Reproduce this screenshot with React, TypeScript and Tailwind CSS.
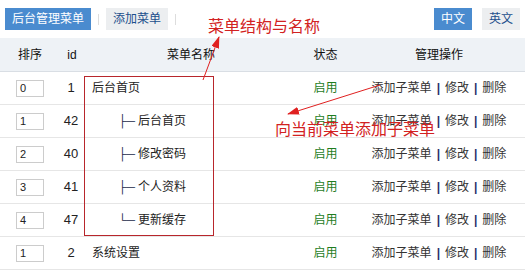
import React from "react";

type Row = {
	order: string;
	id: number;
	name: string;
	prefix?: string;
};

const rows: Row[] = [
	{ order: "0", id: 1, name: "后台首页" },
	{ order: "1", id: 42, name: "后台首页", prefix: "├─" },
	{ order: "2", id: 40, name: "修改密码", prefix: "├─" },
	{ order: "3", id: 41, name: "个人资料", prefix: "├─" },
	{ order: "4", id: 47, name: "更新缓存", prefix: "└─" },
	{ order: "1", id: 2, name: "系统设置" },
];

const cols = "grid grid-cols-[60px_24px_214px_55px_172px] w-[525px]";

function Sep() {
	return <span className="mx-[5px] font-bold text-[#2b2f6b]">|</span>;
}

export default function App() {
	return (
		<div
			className="relative h-[273px] w-[531px] overflow-hidden bg-white text-[12px] text-[#222]"
			style={{ fontFamily: '"Liberation Sans", "Noto Sans CJK SC", sans-serif' }}
		>
			{/* top toolbar */}
			<div className="flex h-[38px] items-center justify-between pl-[5px] pr-[11px]">
				<div className="flex items-center">
					<span className="flex h-[22px] w-[86px] items-center justify-center bg-[#4a8bcf] text-white">
						后台管理菜单
					</span>
					<span className="mx-[7px] h-[11px] w-px bg-[#ddd]" />
					<span className="flex h-[22px] w-[62px] items-center justify-center bg-[#eceef0] text-[#1c4f8c]">
						添加菜单
					</span>
					<span className="mx-[7px] h-[11px] w-px bg-[#ddd]" />
				</div>
				<div className="flex items-center gap-[10px]">
					<span className="flex h-[22px] w-[38px] items-center justify-center bg-[#4a8bcf] text-white">
						中文
					</span>
					<span className="flex h-[22px] w-[38px] items-center justify-center bg-[#eceef0] text-[#1c4f8c]">
						英文
					</span>
				</div>
			</div>

			{/* table header */}
			<div className={`${cols} h-[34px] items-center border-b border-[#d9dee4] bg-[#eef2f6] text-[#111]`}>
				<div className="text-center">排序</div>
				<div className="text-center">id</div>
				<div className="text-center">菜单名称</div>
				<div className="text-center">状态</div>
				<div className="text-center">管理操作</div>
			</div>

			{/* rows */}
			{rows.map((r, i) => (
				<div key={i} className={`${cols} h-[33px] items-center border-b border-[#e6e6e6]`}>
					<div className="flex justify-center">
						<div className="flex h-[17px] w-[28px] items-center border border-[#ccc] pl-[3px] text-[11px]">
							{r.order}
						</div>
					</div>
					<div className="pr-[2px] text-center text-[13px]">{r.id}</div>
					<div className="flex items-center pl-[8px] text-[12px]">
						{r.prefix ? (
							<>
								<span className="ml-[26px] mr-[3px] text-[#1a2a4a]">{r.prefix}</span>
								<span>{r.name}</span>
							</>
						) : (
							<span>{r.name}</span>
						)}
					</div>
					<div className="text-center text-[#1f7d1f]">启用</div>
					<div className="flex items-center justify-center text-[#333]">
						<span>添加子菜单</span>
						<Sep />
						<span>修改</span>
						<Sep />
						<span>删除</span>
					</div>
				</div>
			))}

			{/* annotations */}
			<div className="pointer-events-none absolute left-[84px] top-[76px] h-[160px] w-[130px] border border-[#b8262c]" />
			<div className="absolute left-[208px] top-[17px] text-[16px] leading-[20px] text-[#d22222]">
				菜单结构与名称
			</div>
			<div className="absolute left-[275px] top-[120px] text-[16px] leading-[20px] text-[#d22222]">
				向当前菜单添加子菜单
			</div>
			<svg className="pointer-events-none absolute left-0 top-0" width="531" height="273">
				<defs>
					<marker id="ah" markerWidth="12" markerHeight="8" refX="11" refY="4" orient="auto" markerUnits="userSpaceOnUse">
						<path d="M0,0 L12,4 L0,8 Z" fill="#e02020" />
					</marker>
				</defs>
				<line x1="203" y1="80" x2="219" y2="37" stroke="#e02020" strokeWidth="1" markerEnd="url(#ah)" />
				<line x1="380" y1="85" x2="288" y2="114" stroke="#e02020" strokeWidth="1" markerEnd="url(#ah)" />
			</svg>
		</div>
	);
}
